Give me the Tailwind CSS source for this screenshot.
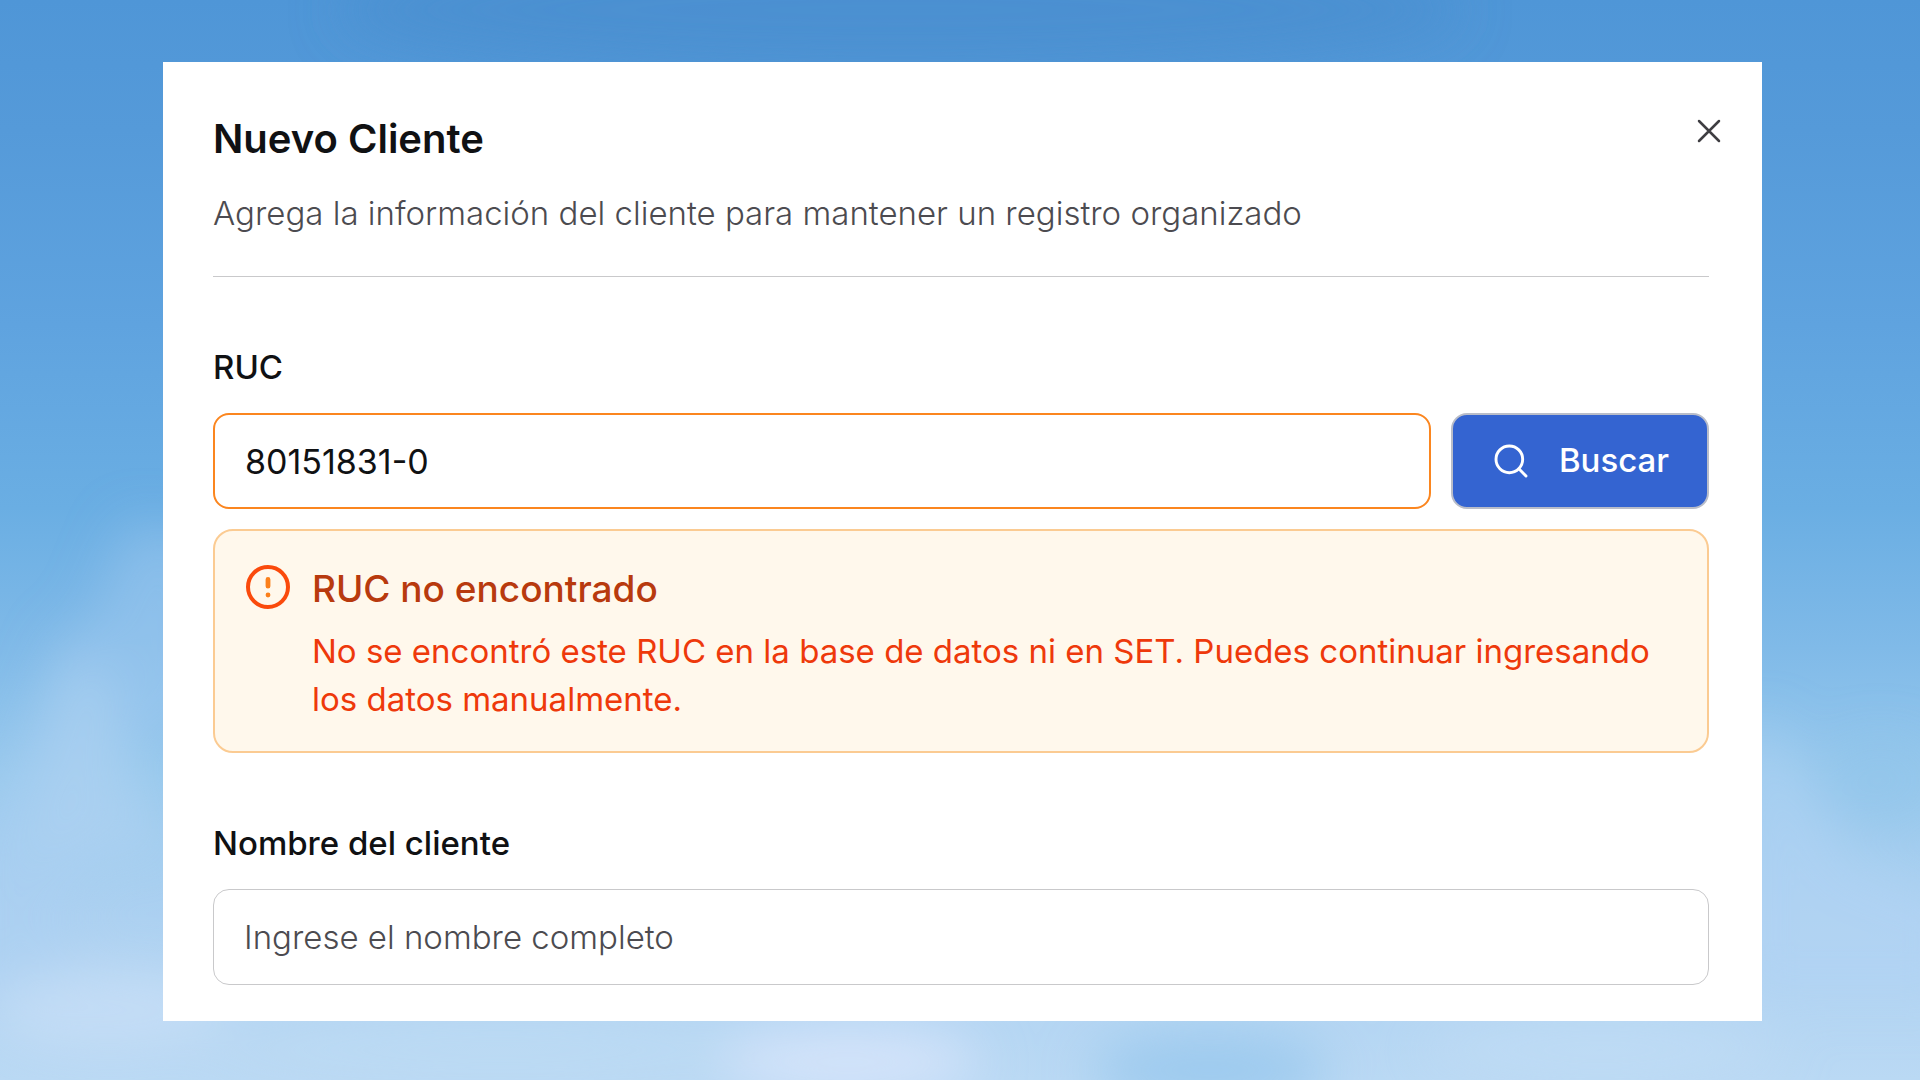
<!DOCTYPE html>
<html lang="es">
<head>
<meta charset="utf-8">
<meta name="viewport" content="width=device-width, initial-scale=1">
<title>Nuevo Cliente</title>
<script src="https://cdn.jsdelivr.net/npm/@tailwindcss/browser@4"></script>
</head>
<body class="relative min-h-screen overflow-x-hidden bg-[#5a9fdc] pt-[62px] pr-[158px] pb-[59px] pl-[163px] font-['Inter',sans-serif] text-[#101113]">
  <!-- Sky backdrop -->
  <svg class="absolute inset-0 -z-10 h-full w-full" viewBox="0 0 1920 1080" preserveAspectRatio="none" aria-hidden="true">
    <defs>
      <linearGradient id="sky" x1="0" y1="0" x2="0" y2="1">
        <stop offset="0" stop-color="#4f96d7"/>
        <stop offset="0.12" stop-color="#559ad9"/>
        <stop offset="0.3" stop-color="#5fa3df"/>
        <stop offset="0.47" stop-color="#6aaee3"/>
        <stop offset="0.6" stop-color="#80bae8"/>
        <stop offset="0.72" stop-color="#98c9ed"/>
        <stop offset="0.85" stop-color="#add1f1"/>
        <stop offset="1" stop-color="#bad9f4"/>
      </linearGradient>
      <filter id="soft" x="-50%" y="-50%" width="200%" height="200%"><feGaussianBlur stdDeviation="26"/></filter>
    </defs>
    <rect width="1920" height="1080" fill="url(#sky)"/>
    <g filter="url(#soft)">
      <ellipse cx="900" cy="10" rx="560" ry="60" fill="#4a8dce" opacity="0.7"/>
      <path d="M-40 860 L20 740 L70 620 L90 720 L70 1000 L-40 1000Z" fill="#acd0f1" opacity="0.5"/>
      <path d="M60 690 L130 520 L210 540 L210 720 L120 740Z" fill="#a5cdf0" opacity="0.45"/>
      <path d="M30 860 L80 640 L120 720 L170 860Z" fill="#b0d2f2" opacity="0.6"/>
      <path d="M1740 740 L1770 720 L1850 860 L1960 900 L1960 1000 L1740 1000Z" fill="#b3d4f3" opacity="0.6"/>
      <ellipse cx="1880" cy="780" rx="60" ry="40" fill="#8fc3ea" opacity="0.5"/>
      <ellipse cx="110" cy="1010" rx="120" ry="40" fill="#cadff7" opacity="0.7"/>
      <ellipse cx="500" cy="1050" rx="300" ry="30" fill="#bedbf4" opacity="0.7"/>
      <ellipse cx="850" cy="1062" rx="130" ry="36" fill="#d6e4fb" opacity="0.9"/>
      <ellipse cx="1210" cy="1070" rx="120" ry="36" fill="#98c8ed" opacity="0.9"/>
      <ellipse cx="1600" cy="1050" rx="180" ry="30" fill="#c1dcf5" opacity="0.8"/>
    </g>
  </svg>

  <main class="bg-white pt-[49px] pr-[53px] pb-9 pl-[50px]">
    <header class="flex items-start justify-between border-b border-[#c9c9cb] pb-[39px]">
      <div>
        <h1 class="text-[40px] leading-[56px] font-semibold">Nuevo Cliente</h1>
        <p class="mt-[22px] text-[33px] leading-12 font-light text-[#4c4b50]">Agrega la información del cliente para mantener un registro organizado</p>
      </div>
      <button type="button" aria-label="Cerrar" class="-mr-5 text-[#3f3e42]">
        <svg class="size-10" viewBox="0 0 24 24" fill="none" stroke="currentColor" stroke-width="1.5" stroke-linecap="round" aria-hidden="true"><path d="M18 6 6 18M6 6l12 12"/></svg>
      </button>
    </header>

    <form class="pt-[66px]">
      <label for="ruc" class="block text-[33px] leading-12 font-medium">RUC</label>
      <div class="mt-[22px] flex gap-5">
        <input id="ruc" type="text" value="80151831-0" class="h-24 min-w-0 flex-1 rounded-2xl border-2 border-[#fb861f] bg-white px-[30px] text-[34px] outline-none">
        <button type="button" class="flex h-24 w-[258px] items-center justify-center gap-7 rounded-2xl border-2 border-[#b9bdc9] bg-[#3464d1] text-[33px] font-medium text-white">
          <svg class="size-10" viewBox="0 0 24 24" fill="none" stroke="currentColor" stroke-width="1.75" stroke-linecap="round" aria-hidden="true"><circle cx="11" cy="11" r="8"/><path d="m21 21-4.3-4.3"/></svg>
          Buscar
        </button>
      </div>

      <div role="alert" class="mt-5 flex gap-5 rounded-[20px] border-2 border-[#fbcb92] bg-[#fff8ec] py-7 pr-12 pl-[29px]">
        <svg class="mt-1 size-12 shrink-0" viewBox="0 0 24 24" fill="none" stroke-width="2" stroke-linecap="round" aria-hidden="true"><circle cx="12" cy="12" r="10" stroke="#fa4a0c"/><path d="M12 8.2v3.4M12 16h.01" stroke="#fb7f1a" stroke-width="2.4"/></svg>
        <div>
          <p class="text-[37px] leading-[60px] font-medium text-[#b83a0e]">RUC no encontrado</p>
          <p class="mt-2 text-[33px] leading-12 text-[#ee390b]">No se encontró este RUC en la base de datos ni en SET. Puedes continuar ingresando los datos manualmente.</p>
        </div>
      </div>

      <label for="nombre" class="mt-[66px] block text-[33px] leading-12 font-medium">Nombre del cliente</label>
      <input id="nombre" type="text" placeholder="Ingrese el nombre completo" class="mt-[22px] block h-24 w-full rounded-2xl border border-[#c9c9cb] bg-white px-[30px] text-[33px] font-light outline-none placeholder:text-[#4c4b50]">
    </form>
  </main>
</body>
</html>
